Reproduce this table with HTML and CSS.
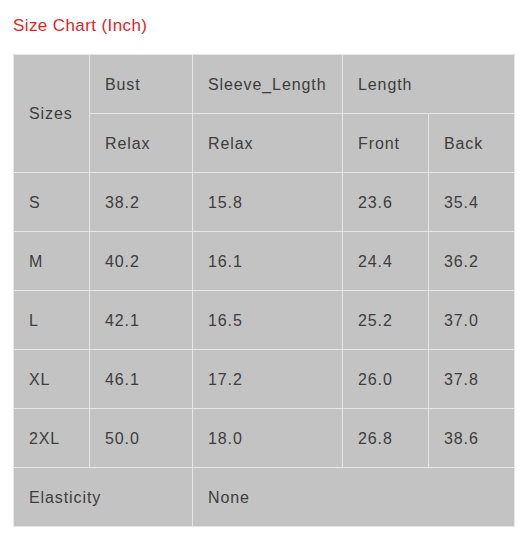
FILE: index.html
```html
<!DOCTYPE html>
<html>
<head>
<meta charset="utf-8">
<link rel="stylesheet" href="styles.css">
</head>
<body>
<div class="wrap">
  <h2 class="title">Size Chart (Inch)</h2>
  <table class="chart">
    <colgroup>
      <col class="c1"><col class="c2"><col class="c3"><col class="c4"><col class="c5">
    </colgroup>
    <tr><td rowspan="2">Sizes</td><td>Bust</td><td>Sleeve_Length</td><td colspan="2">Length</td></tr>
    <tr><td>Relax</td><td>Relax</td><td>Front</td><td>Back</td></tr>
    <tr><td>S</td><td>38.2</td><td>15.8</td><td>23.6</td><td>35.4</td></tr>
    <tr><td>M</td><td>40.2</td><td>16.1</td><td>24.4</td><td>36.2</td></tr>
    <tr><td>L</td><td>42.1</td><td>16.5</td><td>25.2</td><td>37.0</td></tr>
    <tr><td>XL</td><td>46.1</td><td>17.2</td><td>26.0</td><td>37.8</td></tr>
    <tr><td>2XL</td><td>50.0</td><td>18.0</td><td>26.8</td><td>38.6</td></tr>
    <tr><td colspan="2">Elasticity</td><td colspan="3">None</td></tr>
  </table>
</div>
</body>
</html>
```

FILE: styles.css
```css
html, body {
  margin: 0;
  padding: 0;
  background: #ffffff;
}
.wrap {
  padding: 14px 13px 0 13px;
  font-family: "Liberation Sans", Arial, sans-serif;
}
.title {
  margin: 0 0 17px 0;
  font-size: 17px;
  font-weight: normal;
  line-height: 23px;
  letter-spacing: 0.4px;
  color: #e41e26;
}
.chart {
  border-collapse: collapse;
  table-layout: fixed;
  width: 502px;
  background: #c3c3c3;
}
.c1 { width: 76px; }
.c2 { width: 103px; }
.c3 { width: 150px; }
.c4 { width: 86px; }
.c5 { width: 86px; }
.chart td {
  border: 1px solid #e6e6e6;
  height: 59px;
  padding: 1px 0 0 15px;
  box-sizing: border-box;
  font-size: 16px;
  color: #3d3d3d;
  vertical-align: middle;
  letter-spacing: 0.9px;
}
```
